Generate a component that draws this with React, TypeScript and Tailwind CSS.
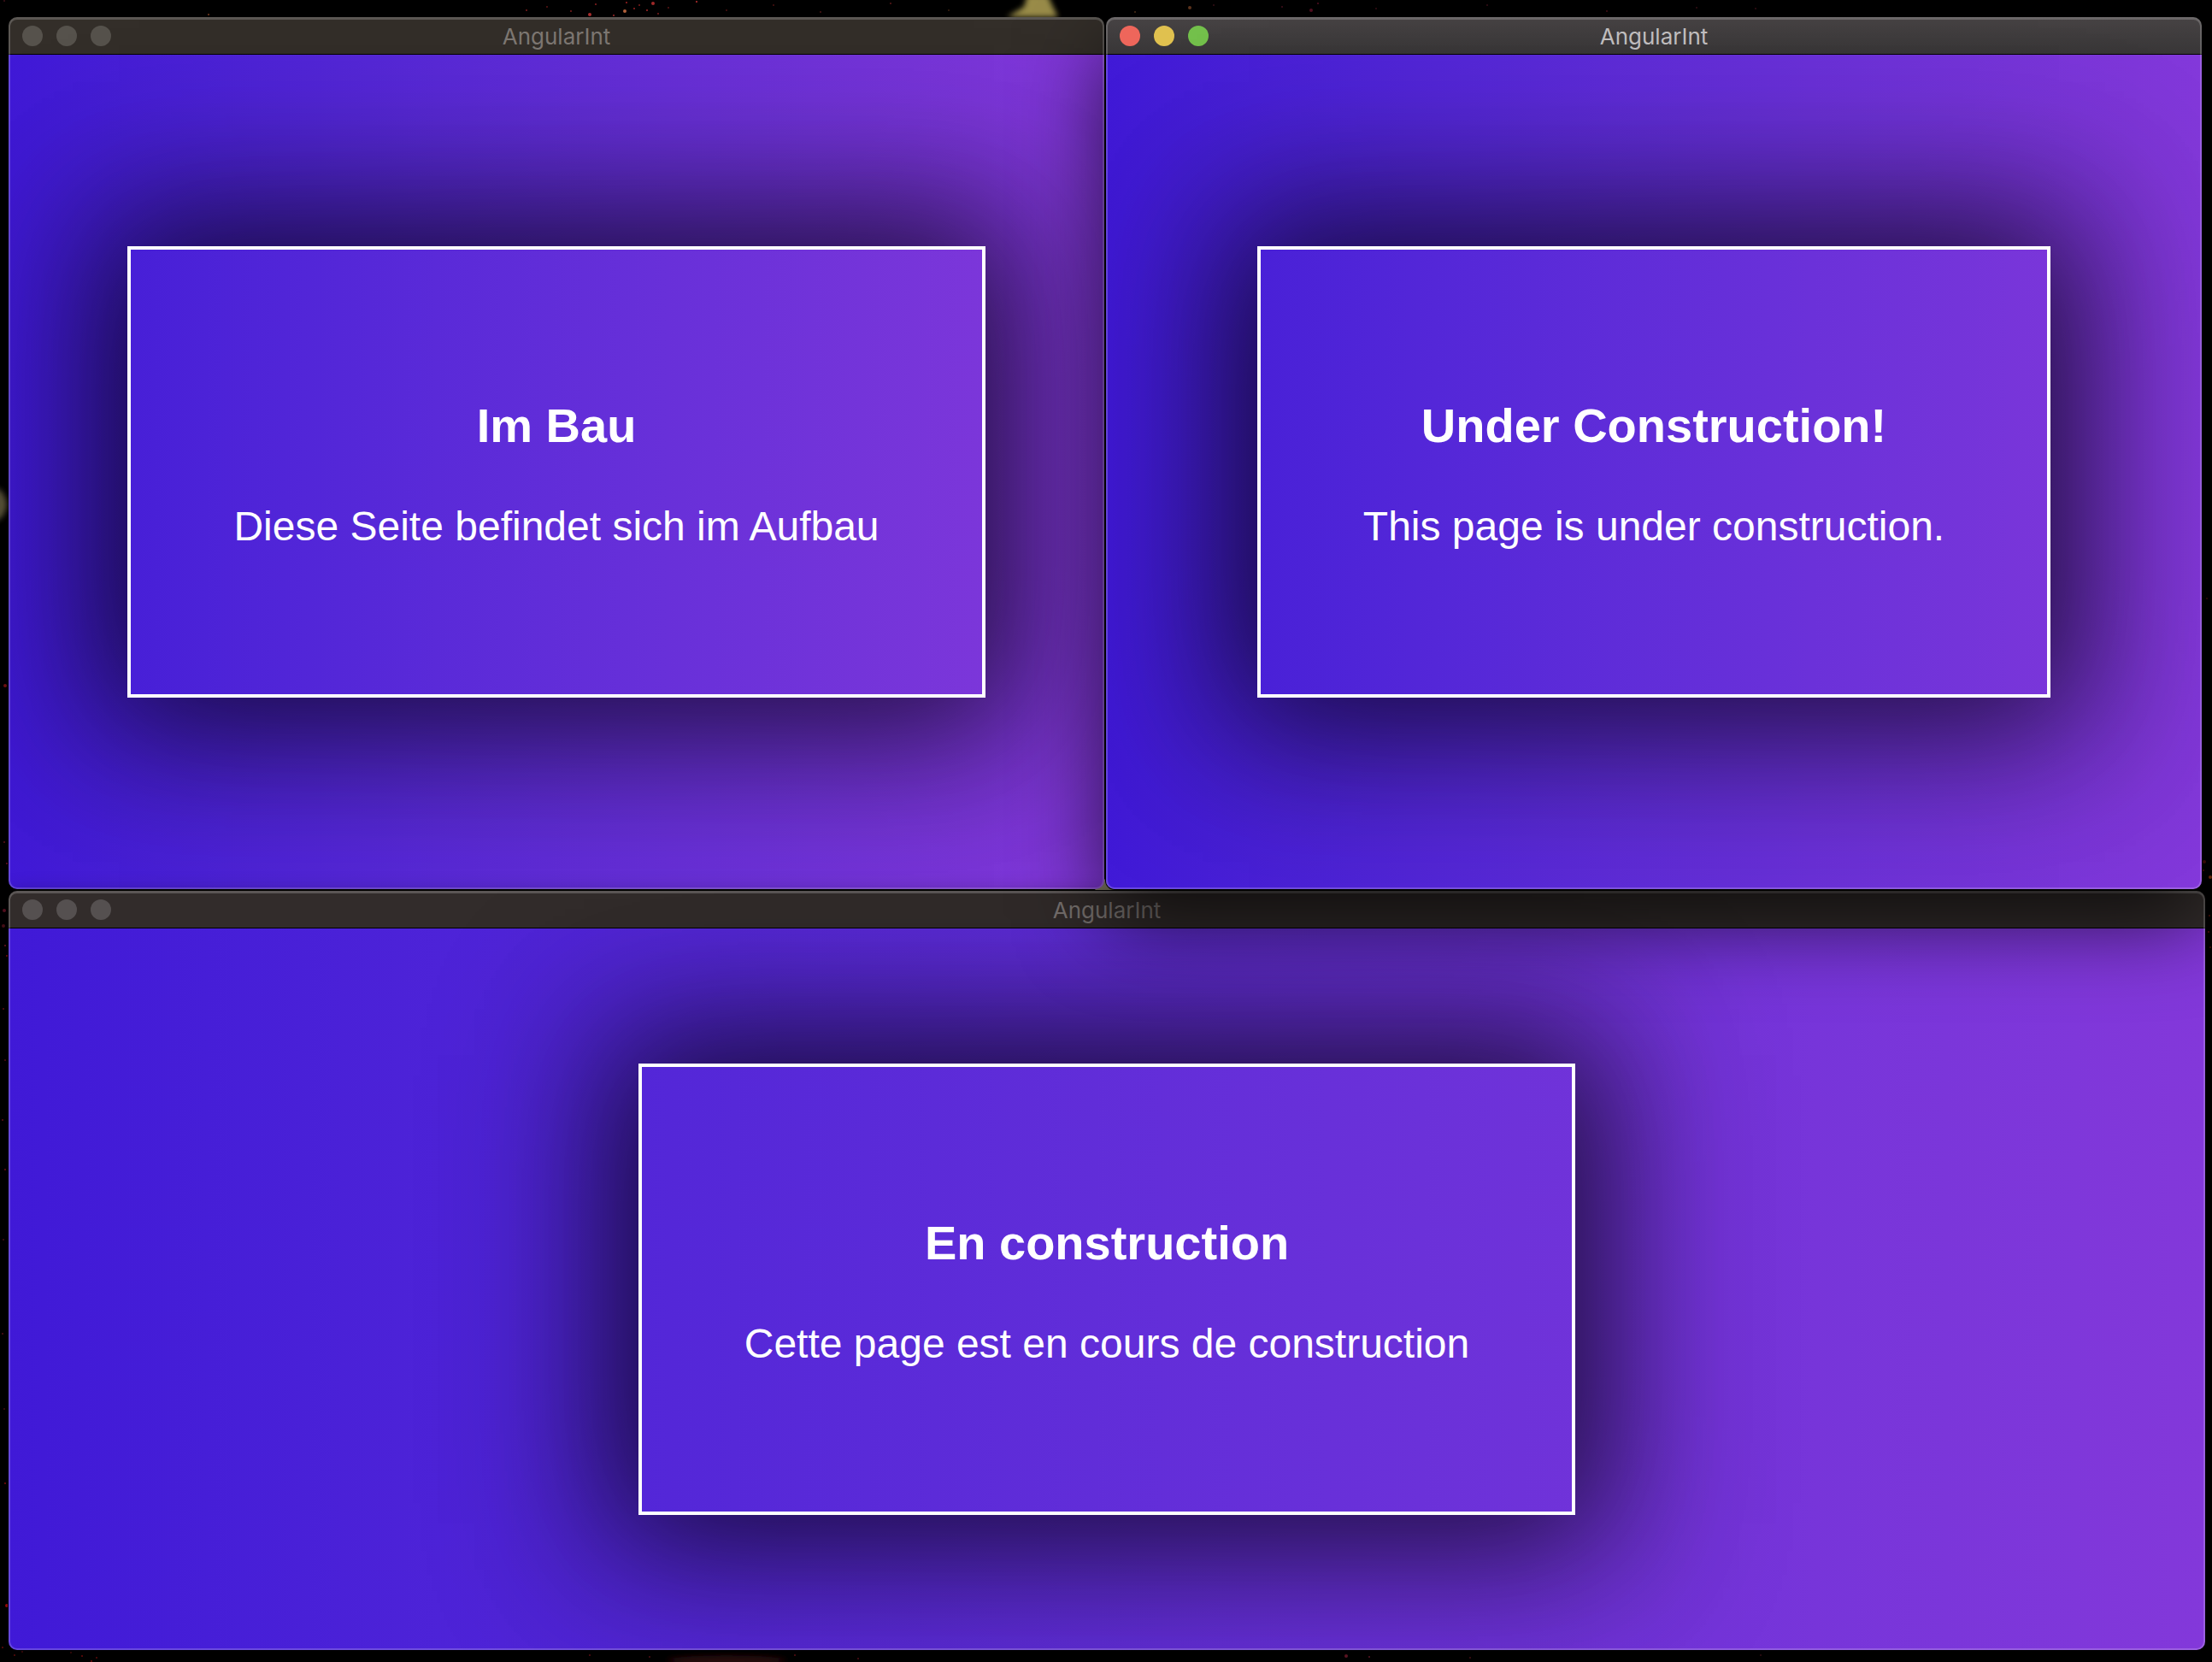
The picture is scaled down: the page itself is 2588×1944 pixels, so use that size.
import React from "react";

type WindowProps = {
  heading: string;
  message: string;
  variant: "inactive" | "active" | "wide";
};

const barStyles = {
  inactive: "bg-[#332e29] text-[#7d7772]",
  active: "bg-linear-to-b from-[#474344] to-[#383637] text-[#c0bebf]",
  wide: "bg-[#322c2b] text-[#7a7472]",
};

const frameStyles = {
  inactive: "",
  active: "z-20 shadow-[0_0_0_1px_#000,0_36px_100px_rgba(0,0,0,0.7)]",
  wide: "z-10 shadow-[0_0_0_1px_#000,0_4px_24px_rgba(0,0,0,0.35)]",
};

const lightStyles = {
  inactive: ["bg-[#56524c]", "bg-[#56524c]", "bg-[#56524c]"],
  active: ["bg-[#ee665b]", "bg-[#e0c14f]", "bg-[#73c04b]"],
  wide: ["bg-[#555050]", "bg-[#555050]", "bg-[#555050]"],
};

function BrowserWindow({ heading, message, variant }: WindowProps) {
  return (
    <section className={`relative rounded-[10px] ${frameStyles[variant]}`}>
      <div className="overflow-hidden rounded-[10px]">
        <header
          className={`grid h-11 grid-cols-[1fr_auto_1fr] items-center border-b border-black px-4 ${barStyles[variant]}`}
        >
          <div className="flex gap-4">
            {["Close", "Minimize", "Zoom"].map((label, i) => (
              <button
                key={label}
                type="button"
                aria-label={label}
                className={`size-6 rounded-full ${lightStyles[variant][i]}`}
              />
            ))}
          </div>
          <span className="pt-0.5 font-['Inter',sans-serif] text-[26px] leading-8">AngularInt</span>
        </header>
        <main
          className={`flex justify-center bg-linear-to-r from-[#4019d7] to-[#8338da] ${
            variant === "wide" ? "py-[158px]" : "py-56"
          }`}
        >
          <div className="flex h-[528px] flex-col items-center justify-center gap-14 border-4 border-white px-30 pt-2 text-white shadow-[0_0_150px_10px_rgba(0,0,0,0.6),0_0_170px_70px_rgba(0,0,0,0.32)]">
            <h1 className="text-[56px] leading-16 font-bold whitespace-nowrap">{heading}</h1>
            <p className="text-5xl leading-15 whitespace-nowrap">{message}</p>
          </div>
        </main>
      </div>
      <div className="pointer-events-none absolute inset-0 rounded-[10px] border-2 border-white/20 shadow-[inset_0_1px_0_rgba(255,255,255,0.2)]" />
    </section>
  );
}

const stars: [number, number, number, string][] = [
  [244, 17, 1, "#7a3a1c"], [616, 12, 1, "#7c1c1c"], [640, 8, 1, "#5c1414"], [668, 13, 1, "#7c1c1c"],
  [690, 17, 2, "#a82c2c"], [697, 5, 1, "#8c2020"], [718, 18, 1, "#a42a2a"], [731, 13, 2, "#b0603a"],
  [733, 3, 1, "#a02020"], [742, 10, 1, "#9c2020"], [748, 6, 1, "#7c1c1c"], [757, 12, 1, "#a82828"],
  [764, 4, 2, "#a02828"], [770, 16, 1, "#7c1c1c"], [782, 9, 1, "#5c1414"], [815, 2, 1, "#c03030"],
  [850, 12, 1, "#4c1010"], [905, 6, 1, "#4c1010"], [960, 14, 1, "#4c1414"], [1042, 4, 1, "#5c1818"],
  [1110, 12, 1, "#3c2010"], [1328, 14, 1, "#54341c"], [1392, 9, 2, "#6a3a20"], [1420, 6, 1, "#3c1018"],
  [1500, 8, 1, "#4c1020"], [1534, 12, 2, "#5c1024"], [1542, 4, 1, "#5c1024"], [1610, 10, 1, "#3c1018"],
  [1740, 6, 1, "#3c1018"], [1880, 13, 1, "#4c1018"], [1985, 9, 1, "#3c1018"], [2054, 10, 1, "#3c1018"],
  [5, 1, 1, "#3c1018"], [6, 802, 2, "#6a1010"], [5, 985, 1, "#5c1018"], [8, 1010, 1, "#6a1020"],
  [5, 1065, 2, "#5c1020"], [4, 1083, 2, "#4c1018"], [6, 1106, 1, "#7c1828"], [8, 1118, 1, "#8c1010"],
  [4, 1180, 1, "#6a1018"], [6, 1240, 1, "#5c1018"], [3, 1310, 1, "#6a1018"], [6, 1368, 1, "#7c1018"],
  [4, 1450, 1, "#4c1018"], [3, 1560, 1, "#5c1018"], [5, 1648, 1, "#4c1018"], [6, 1735, 1, "#8c1010"],
  [8, 1878, 2, "#a80c0c"], [3, 1927, 1, "#6a0c0c"], [17, 1936, 1, "#6a0c0c"], [26, 1932, 1, "#4c0c0c"],
  [83, 1933, 1, "#4c0c0c"], [96, 1937, 1, "#7c0c0c"], [113, 1939, 1, "#6a0c0c"], [107, 1943, 1, "#7c0c0c"],
  [690, 1936, 1, "#6a1018"], [760, 1938, 1, "#5c1018"], [930, 1936, 1, "#6a1018"], [1004, 1940, 1, "#5c1018"],
  [1575, 1937, 2, "#6a1828"], [1602, 1938, 1, "#6a1828"], [1720, 1939, 1, "#4c1018"], [2060, 1936, 1, "#3c1018"],
  [2579, 1008, 2, "#4c1008"], [2578, 1018, 1, "#5c1008"], [2586, 1026, 2, "#7c300c"], [2585, 1071, 1, "#5c1408"],
  [2584, 1090, 1, "#6a1010"], [2582, 700, 1, "#4c1008"], [2586, 1108, 1, "#4c1008"],
];

function Wallpaper() {
  return (
    <svg className="absolute inset-0 size-full" viewBox="0 0 2588 1944" preserveAspectRatio="none" aria-hidden="true">
      <defs>
        <filter id="soft" x="-30%" y="-30%" width="160%" height="160%">
          <feGaussianBlur stdDeviation="3" />
        </filter>
      </defs>
      <path d="M1202 -6H1226L1230 4L1238 20H1178L1198 8Z" fill="#9a8c4a" filter="url(#soft)" />
      <path d="M-6 570Q6 574 8 590Q6 606-6 610Z" fill="#545034" filter="url(#soft)" />
      <path d="M1280 1042L1293 1028L1306 1042Z" fill="#8a836a" />
      <ellipse cx="850" cy="1942" rx="70" ry="6" fill="#2a080e" filter="url(#soft)" />
      {stars.map(([x, y, r, fill]) => (
        <circle key={`${x}-${y}`} cx={x} cy={y} r={r} fill={fill} />
      ))}
    </svg>
  );
}

export default function App() {
  return (
    <div className="relative isolate flex min-h-screen flex-col gap-0.5 overflow-hidden bg-black pt-5 pb-3.5 font-['Liberation_Sans',Arial,sans-serif]">
      <Wallpaper />
      <div className="grid grid-cols-2 gap-0.5 pr-3 pl-2.5">
        <BrowserWindow variant="inactive" heading="Im Bau" message="Diese Seite befindet sich im Aufbau" />
        <BrowserWindow variant="active" heading="Under Construction!" message="This page is under construction." />
      </div>
      <div className="pr-2 pl-2.5">
        <BrowserWindow variant="wide" heading="En construction" message="Cette page est en cours de construction" />
      </div>
    </div>
  );
}
